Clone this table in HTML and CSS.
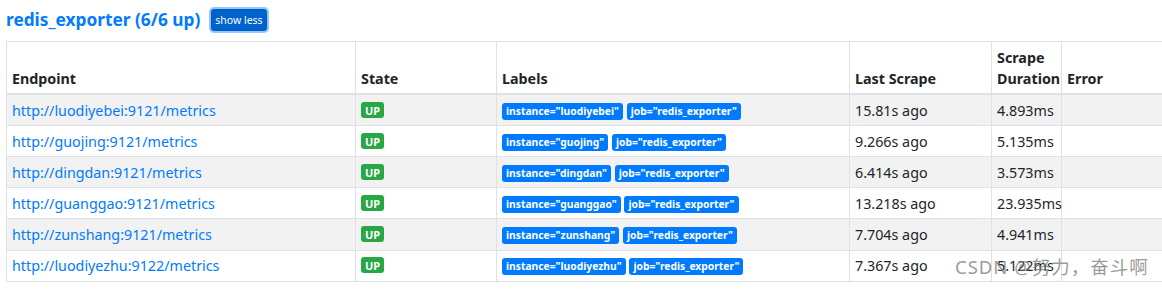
FILE: index.html
```html
<!DOCTYPE html>
<html>
<head>
  <meta charset="utf-8">
  <link rel="stylesheet" href="styles.css">
</head>
<body>
  <div class="pool">
    <div class="pool-head">
      <a class="pool-title">redis_exporter (6/6 up)</a>
      <button class="btn-toggle">show less</button>
    </div>
    <table class="targets">
      <thead>
        <tr>
          <th class="col-endpoint">Endpoint</th>
          <th class="col-state">State</th>
          <th class="col-labels">Labels</th>
          <th class="col-scrape">Last Scrape</th>
          <th class="col-duration">Scrape Duration</th>
          <th class="col-error">Error</th>
        </tr>
      </thead>
      <tbody>
        <tr>
          <td><a href="#">http://luodiyebei:9121/metrics</a></td>
          <td><span class="badge up">UP</span></td>
          <td><span class="badge label">instance="luodiyebei"</span> <span class="badge label">job="redis_exporter"</span></td>
          <td>15.81s ago</td>
          <td>4.893ms</td>
          <td></td>
        </tr>
        <tr>
          <td><a href="#">http://guojing:9121/metrics</a></td>
          <td><span class="badge up">UP</span></td>
          <td><span class="badge label">instance="guojing"</span> <span class="badge label">job="redis_exporter"</span></td>
          <td>9.266s ago</td>
          <td>5.135ms</td>
          <td></td>
        </tr>
        <tr>
          <td><a href="#">http://dingdan:9121/metrics</a></td>
          <td><span class="badge up">UP</span></td>
          <td><span class="badge label">instance="dingdan"</span> <span class="badge label">job="redis_exporter"</span></td>
          <td>6.414s ago</td>
          <td>3.573ms</td>
          <td></td>
        </tr>
        <tr>
          <td><a href="#">http://guanggao:9121/metrics</a></td>
          <td><span class="badge up">UP</span></td>
          <td><span class="badge label">instance="guanggao"</span> <span class="badge label">job="redis_exporter"</span></td>
          <td>13.218s ago</td>
          <td>23.935ms</td>
          <td></td>
        </tr>
        <tr>
          <td><a href="#">http://zunshang:9121/metrics</a></td>
          <td><span class="badge up">UP</span></td>
          <td><span class="badge label">instance="zunshang"</span> <span class="badge label">job="redis_exporter"</span></td>
          <td>7.704s ago</td>
          <td>4.941ms</td>
          <td></td>
        </tr>
        <tr>
          <td><a href="#">http://luodiyezhu:9122/metrics</a></td>
          <td><span class="badge up">UP</span></td>
          <td><span class="badge label">instance="luodiyezhu"</span> <span class="badge label">job="redis_exporter"</span></td>
          <td>7.367s ago</td>
          <td>5.122ms</td>
          <td></td>
        </tr>
      </tbody>
    </table>
  </div>
  <div class="watermark">CSDN @努力，奋斗啊</div>
</body>
</html>
```

FILE: styles.css
```css
/* Общие стили */
html, body {
  margin: 0;
  overflow: hidden;
}

body {
  font-family: "Segoe UI", "Noto Sans", "Noto Sans CJK SC", sans-serif;
  font-size: 14.3px;
  line-height: 21px;
  color: #212529;
  background-color: #fff;
  padding-left: 6px;
}

/* Заголовок пула */
.pool-head {
  display: flex;
  align-items: center;
  gap: 11px;
  height: 41px;
  padding-bottom: 2px;
  box-sizing: border-box;
}

.pool-title {
  font-size: 17.3px;
  font-weight: bold;
  color: #007bff;
  text-decoration: none;
}

.btn-toggle {
  font-family: inherit;
  font-size: 10.5px;
  line-height: 16px;
  color: #fff;
  background-color: #0062cc;
  border: 1px solid #005cbf;
  border-radius: 3px;
  padding: 2px 3px;
  box-shadow: 0 0 0 2px rgba(38, 143, 255, 0.5);
}

/* Таблица таргетов */
.targets {
  width: 1175px;
  border-collapse: collapse;
  table-layout: fixed;
}

.targets th,
.targets td {
  padding: 4.6px 5px 4.5px;
  border: 1px solid #dee2e6;
  text-align: left;
  vertical-align: top;
}

.targets th {
  vertical-align: bottom;
  border-bottom-width: 2px;
  font-weight: bold;
  font-size: 14.3px;
}

.targets tbody tr:nth-child(odd) {
  background-color: #f2f2f2;
}

.targets .col-endpoint { width: 338px; }
.targets .col-state { width: 130px; }
.targets .col-labels { width: 342px; }
.targets .col-scrape { width: 131px; }
.targets .col-duration { width: 59px; }

.targets a {
  color: #007bff;
  text-decoration: none;
}

.badge {
  display: inline-block;
  padding: 1px 4px;
  font-size: 10.3px;
  font-weight: bold;
  line-height: 15px;
  color: #fff;
  border-radius: 3px;
  vertical-align: 1px;
}

.badge.up {
  font-size: 11px;
  padding: 1px 4px 0;
  background-color: #28a745;
}

.badge.label {
  background-color: #007bff;
}

.watermark {
  position: absolute;
  left: 955px;
  top: 256px;
  font-size: 18.5px;
  color: rgba(120, 120, 120, 0.75);
  letter-spacing: 1px;
}
```
